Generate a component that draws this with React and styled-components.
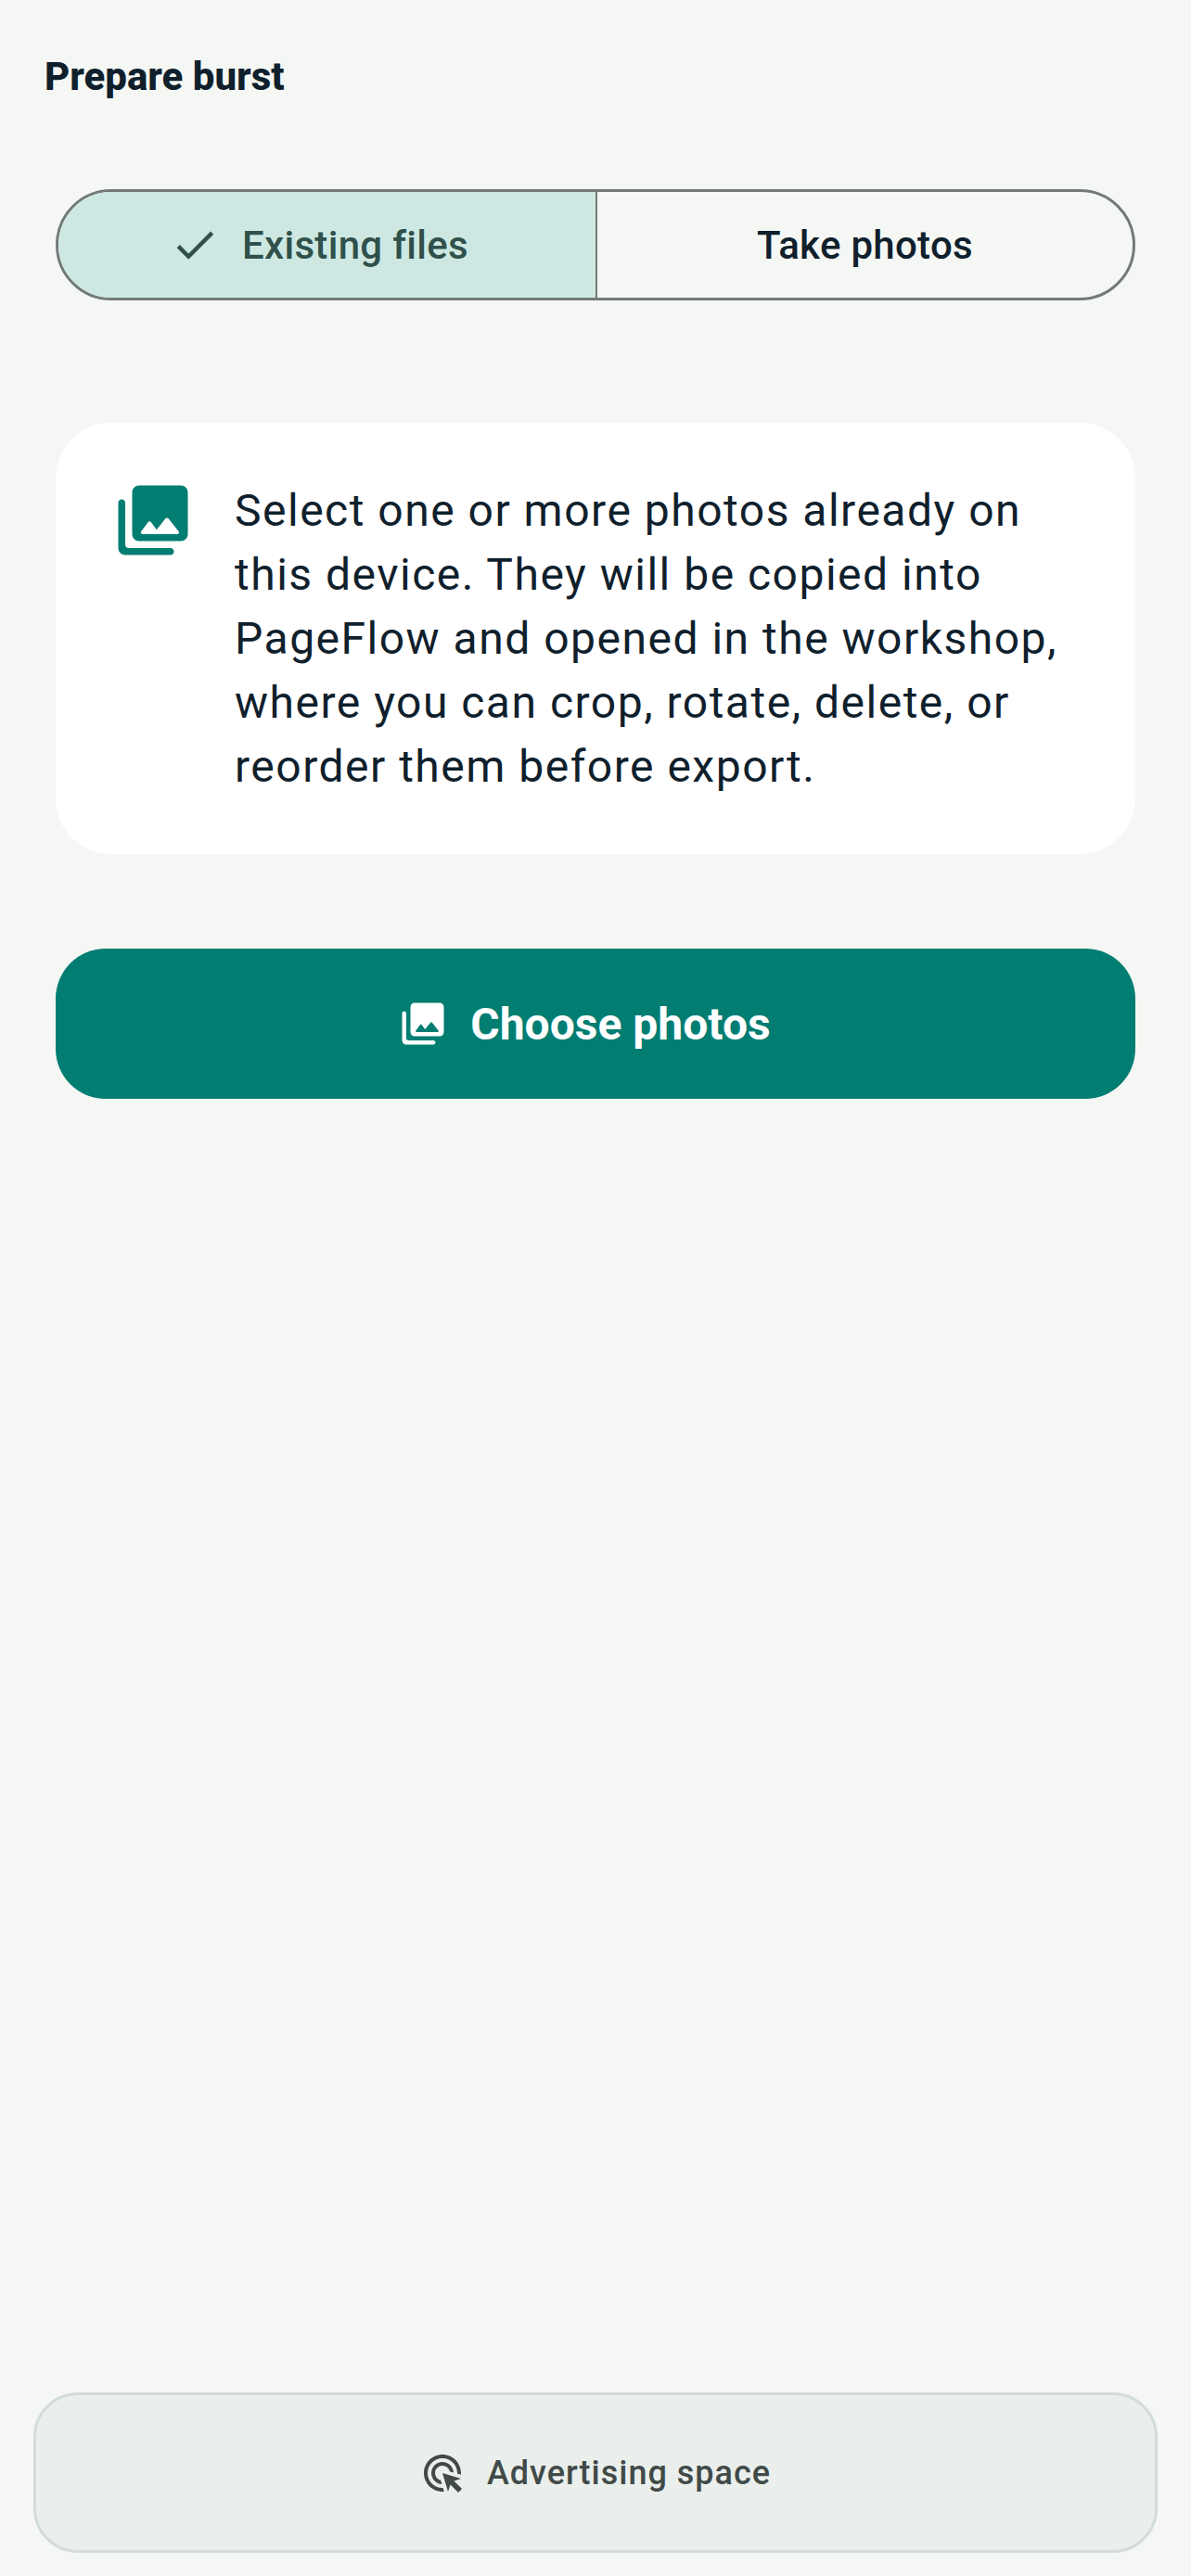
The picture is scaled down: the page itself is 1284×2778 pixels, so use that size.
import React from 'react'
import styled, { createGlobalStyle } from 'styled-components'
import { MdCheck, MdOutlineAdsClick } from 'react-icons/md'

const GlobalStyle = createGlobalStyle`
  html, body {
    margin: 0;
    padding: 0;
    background: #f5f7f4;
  }
  * {
    box-sizing: border-box;
  }
`

const GlyphSvg = styled.svg`
  flex: none;
`

// rounded photo_library glyph, used on the card and the button
const PhotoLibraryIcon = ({ size, color }) => (
  <GlyphSvg width={size} height={size} viewBox="0 0 24 24" fill={color}>
    <path d="M22 16V4c0-1.1-.9-2-2-2H8c-1.1 0-2 .9-2 2v12c0 1.1.9 2 2 2h12c1.1 0 2-.9 2-2zm-10.6-3.47 1.63 2.18 2.58-3.22c.2-.25.58-.25.78 0l2.96 3.7c.26.33.03.81-.39.81H9c-.41 0-.65-.47-.4-.8l2-2.67c.2-.26.6-.26.8 0zM2 7v13c0 1.1.9 2 2 2h13c.55 0 1-.45 1-1s-.45-1-1-1H5c-.55 0-1-.45-1-1V7c0-.55-.45-1-1-1s-1 .45-1 1z" />
  </GlyphSvg>
)

const App = () => (
  <Page>
    <GlobalStyle />
    <Header>Prepare burst</Header>
    <Content>
      <Segments>
        <Segment $selected>
          <MdCheck size={54} />
          Existing files
        </Segment>
        <Segment>Take photos</Segment>
      </Segments>
      <InfoCard>
        <PhotoLibraryIcon size={90} color="#017d72" />
        <InfoText>
          Select one or more photos already on this device. They will be copied
          into PageFlow and opened in the workshop, where you can crop, rotate,
          delete, or reorder them before export.
        </InfoText>
      </InfoCard>
      <PrimaryButton>
        <PhotoLibraryIcon size={54} color="#fff" />
        Choose photos
      </PrimaryButton>
    </Content>
    <AdBanner>
      <MdOutlineAdsClick size={48} />
      Advertising space
    </AdBanner>
  </Page>
)

const Page = styled.div`
  display: flex;
  flex-direction: column;
  width: 1284px;
  height: 2778px;
  background: #f5f7f4;
  font-family: Roboto, "Liberation Sans", sans-serif;
  color: #0f202c;
`

const Header = styled.h1`
  margin: 0;
  padding: 56px 48px 0;
  height: 204px;
  font-size: 42px;
  line-height: 54px;
  font-weight: 800;
  letter-spacing: 0;
`

const Content = styled.main`
  display: flex;
  flex-direction: column;
  padding: 0 60px;
`

const Segments = styled.div`
  display: grid;
  grid-template-columns: 1fr 1fr;
  height: 120px;
  border: 3px solid #727a78;
  border-radius: 60px;
  overflow: hidden;
`

const Segment = styled.button`
  display: flex;
  align-items: center;
  justify-content: center;
  gap: 24px;
  padding: ${(p) => (p.$selected ? '0 17px 0 0' : '0')};
  border: 0;
  font-family: inherit;
  font-size: 42px;
  font-weight: 500;
  letter-spacing: 0.3px;
  background: ${(p) => (p.$selected ? '#cde8e2' : 'transparent')};
  color: ${(p) => (p.$selected ? '#30504b' : '#0f202c')};
  border-left: ${(p) => (p.$selected ? '0' : '2px solid #727a78')};
`

const InfoCard = styled.section`
  display: flex;
  align-items: flex-start;
  gap: 43px;
  margin-top: 132px;
  padding: 60px;
  background: #fff;
  border-radius: 60px;
`

const InfoText = styled.p`
  margin: 0;
  font-size: 48px;
  font-weight: 400;
  line-height: 69px;
  letter-spacing: 1.5px;
`

const PrimaryButton = styled.button`
  display: flex;
  align-items: center;
  justify-content: center;
  gap: 24px;
  height: 162px;
  margin-top: 102px;
  padding: 0 24px 0 0;
  border: 0;
  border-radius: 54px;
  background: #017d72;
  color: #fff;
  font-family: inherit;
  font-size: 48px;
  font-weight: 700;
`

const AdBanner = styled.aside`
  display: flex;
  align-items: center;
  justify-content: center;
  gap: 24px;
  height: 173px;
  margin: auto 36px 25px;
  border: 3px solid #d2dcd8;
  border-radius: 48px;
  background: #eaefec;
  color: #414a48;
  font-size: 36px;
  font-weight: 500;
  letter-spacing: 1px;
`

export default App
